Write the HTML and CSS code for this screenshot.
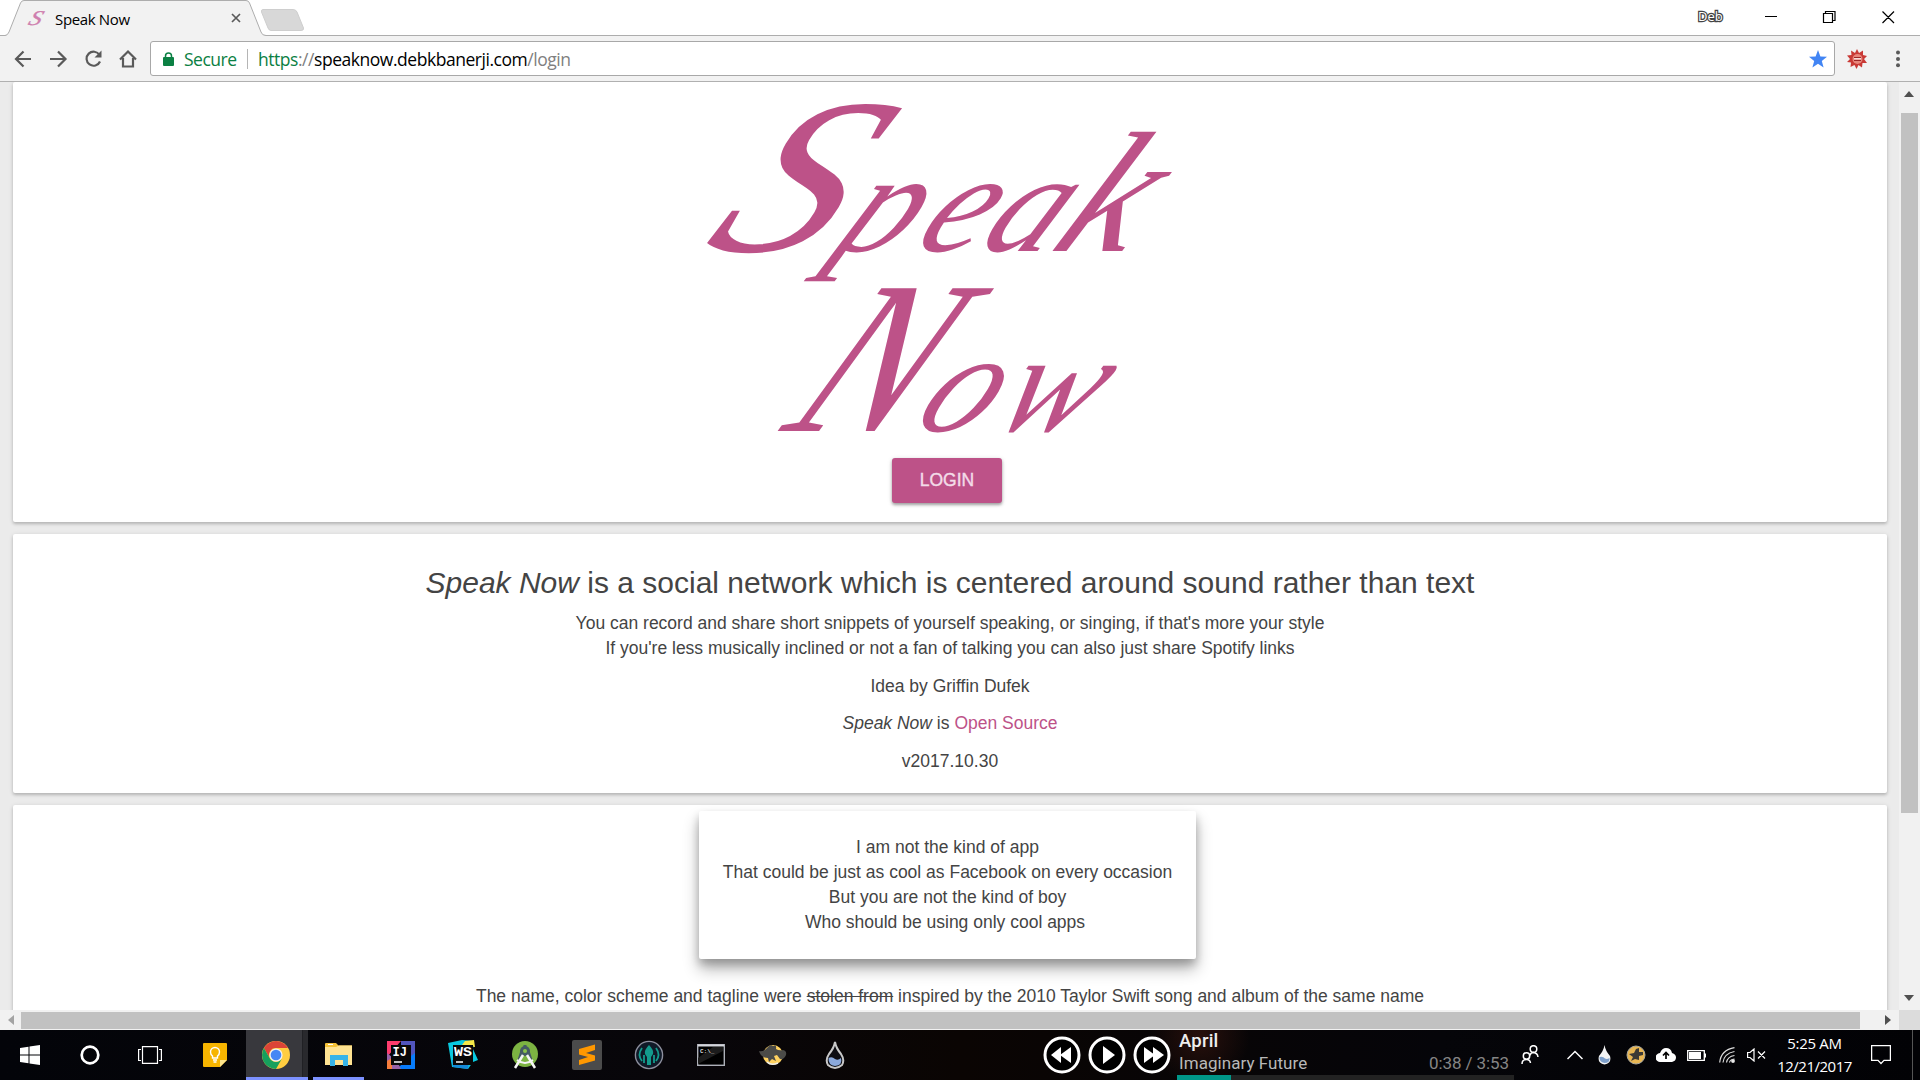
FILE: index.html
```html
<!DOCTYPE html>
<html lang="en">
<head>
<meta charset="utf-8">
<title>Speak Now</title>
<link rel="stylesheet" href="styles.css">
</head>
<body>
<div class="desktop">
  <header class="titlebar">
    <div class="tab">
      <svg class="tab-shape" width="266" height="36" viewBox="0 0 266 36"><path d="M0 36V35.5H6Q8 35 9 32L20.500 3Q21.500.5 24 .5H246Q248.500.5 249.500 3L261 32Q262 35.500 266 35.500V36Z" fill="#f2f2f2"/><path d="M0 35.500H5Q7.500 35.500 9 32L20.500 3Q21.500.5 24 .5H246Q248.500.5 249.500 3L261 32Q262 35.500 266 35.500" fill="none" stroke="#adadad"/></svg>
      <span class="favicon">S</span>
      <span class="tab-title">Speak Now</span>
      <svg class="tab-close" width="10" height="10" viewBox="0 0 10 10"><path d="M1 1L9 9M9 1L1 9" stroke="#5a5a5a" stroke-width="1.700"/></svg>
    </div>
    <svg class="new-tab" width="44" height="22" viewBox="0 0 44 22"><path d="M2 .5H32Q35 .5 36 3L42.500 19Q43 21.500 40 21.500H10Q8 21.500 7 19L.5 3Q0 .5 2 .5Z" fill="#d8d8d8" stroke="#cecece"/></svg>
    <span class="profile">Deb</span>
    <svg class="win-buttons" width="130" height="14" viewBox="0 0 130 14" fill="none" stroke="#000" stroke-width="1.200"><path d="M0 6.500H12M58.500 3.500H67.500V12.500H58.500ZM60.500 3.500V1.500H70V10.500H67.500M117.500 1.500L129 13M129 1.500L117.500 13"/></svg>
  </header>

  <nav class="toolbar">
    <svg class="nav-icons" width="124" height="22" viewBox="0 0 124 22" fill="none" stroke="#5a5a5a" stroke-width="2.200">
      <path d="M17 11H2.500M9.500 3.500L2 11L9.500 18.500M36 11H51M44 3.500L51.500 11L44 18.500"/>
      <path d="M85.500 7A7 7 0 1 0 86 13.500"/><path d="M87.500 2.500V9.500H80.500Z" fill="#5a5a5a" stroke="none"/>
      <path d="M106 11.500L114 3.500L122 11.500M109 10V18.500H119V10" stroke-linejoin="miter"/>
    </svg>
    <div class="omnibox">
      <svg class="lock" width="11" height="14" viewBox="0 0 11 14"><path d="M2.500 6V4A3 3 0 0 1 8.500 4V6" fill="none" stroke="#0b8043" stroke-width="1.500"/><rect y="5" width="11" height="9" rx="1" fill="#0b8043"/></svg>
      <span class="secure">Secure</span>
      <span class="divider"></span>
      <span class="url"><span class="scheme">https</span>://<span class="host">speaknow.debkbanerji.com</span>/login</span>
      <svg class="star" width="18" height="18" viewBox="0 0 18 18"><path d="M9 0L11.400 6.400L18 6.700L12.800 10.900L14.600 17.500L9 13.700L3.400 17.500L5.200 10.900L0 6.700L6.600 6.400Z" fill="#4285f4"/></svg>
    </div>
    <svg class="extension" width="20" height="20" viewBox="0 0 20 20"><path d="M10 0L12 4L16 1.500L16 6L20 7L17 10L20 14L15.500 14L15 18.500L11.500 16L9.500 20L7.500 16L3.500 18L4 13.500L0 13L3 10L0 6.500L4.500 6L4 1.500L8 4Z" fill="#c93a36"/><circle cx="10.500" cy="10" r="5" fill="#e8877c"/><path d="M7 8.500H14M7 11.500H14" stroke="#9d2727" stroke-width="1.200"/><path d="M7 9.800H14" stroke="#fff"/></svg>
    <svg class="menu-dots" width="6" height="18" viewBox="0 0 6 18" fill="#5a5a5a"><circle cx="3" cy="2.500" r="2"/><circle cx="3" cy="9" r="2"/><circle cx="3" cy="15.300" r="2"/></svg>
  </nav>

  <div class="viewport">
    <main class="page">
      <section class="card hero">
        <svg class="wordmark" width="500" height="354" viewBox="0 0 500 354" role="img" aria-label="Speak Now">
          <g transform="translate(0 166) skewX(-30)"><text y="-1"><tspan class="initial" x="2" textLength="124" lengthAdjust="spacingAndGlyphs">S</tspan></text><text y="-1"><tspan class="letters" x="132 213 278">pea</tspan><tspan class="tall" x="350">k</tspan></text></g>
          <g transform="translate(0 345) skewX(-30)"><text class="initial-n" x="82" textLength="124" lengthAdjust="spacingAndGlyphs">N</text><text class="letters" x="212 290">ow</text></g>
        </svg>
        <button class="login">LOGIN</button>
      </section>

      <section class="card about">
        <h1><em>Speak Now</em> is a social network which is centered around sound rather than text</h1>
        <p>You can record and share short snippets of yourself speaking, or singing, if that's more your style<br>If you're less musically inclined or not a fan of talking you can also just share Spotify links</p>
        <p>Idea by Griffin Dufek</p>
        <p><em>Speak Now</em> is <a>Open Source</a></p>
        <p>v2017.10.30</p>
      </section>

      <section class="card lyrics">
        <div class="verse">I am not the kind of app<br>That could be just as cool as Facebook on every occasion<br>But you are not the kind of boy<br><span class="last-line">Who should be using only cool apps</span></div>
        <p class="credit">The name, color scheme and tagline were <s>stolen from</s> inspired by the 2010 Taylor Swift song and album of the same name</p>
      </section>
    </main>
    <div class="vscroll">
      <svg width="10" height="6" viewBox="0 0 10 6"><path d="M5 0L10 6H0Z" fill="#505050"/></svg>
      <span class="vthumb"></span>
      <svg class="down" width="10" height="6" viewBox="0 0 10 6"><path d="M0 0H10L5 6Z" fill="#505050"/></svg>
    </div>
  </div>
  <div class="hscroll">
    <div class="htrack">
      <svg width="6" height="10" viewBox="0 0 6 10"><path d="M6 0V10L0 5Z" fill="#a3a3a3"/></svg>
      <span class="hthumb"></span>
      <svg class="right" width="6" height="10" viewBox="0 0 6 10"><path d="M0 0V10L6 5Z" fill="#505050"/></svg>
    </div>
  </div>

  <footer class="taskbar">
    <div class="system">
      <span><svg width="20" height="20" viewBox="0 0 20 20" fill="#fff"><path d="M0 3L8.500 1.800V9.500H0ZM9.500 1.600L20 0V9.500H9.500ZM0 10.500H8.500V18.200L0 17ZM9.500 10.500H20V20L9.500 18.400Z"/></svg></span>
      <span><svg width="20" height="20" viewBox="0 0 20 20"><circle cx="10" cy="10" r="8.300" fill="none" stroke="#fff" stroke-width="2.700"/></svg></span>
      <span><svg width="24" height="18" viewBox="0 0 24 18" fill="none" stroke="#fff" stroke-width="1.200"><path d="M4.500.6H19.500V17.400H4.500ZM3 3.500H.6V14.500H3M21 3.500H23.400V14.500H21"/></svg></span>
    </div>
    <div class="apps">
      <span><svg width="24" height="24" viewBox="0 0 24 24"><path d="M1 0H23Q24 0 24 1V17L17 24H1Q0 24 0 23V1Q0 0 1 0Z" fill="#f7b500"/><path d="M24 17L17 24V17Z" fill="#ffe58c"/><path d="M9.500 15V13Q7.500 11.500 7.500 9A4.500 4.500 0 0 1 16.500 9Q16.500 11.500 14.500 13V15ZM10 17H14M10.500 19H13.500" fill="none" stroke="#fff" stroke-width="1.400"/></svg></span>
      <span class="active"><svg width="28" height="28" viewBox="0 0 28 28"><circle cx="14" cy="14" r="14" fill="#ffcd40"/><path d="M1.900 7A14 14 0 0 1 26.100 7H14A7 7 0 0 0 7.900 17.500Z" fill="#db4437"/><path d="M1.900 7A14 14 0 0 0 14 28L20 17.500A7 7 0 0 1 7.900 17.500Z" fill="#16a05d"/><circle cx="14" cy="14" r="6.600" fill="#f1f1f1"/><circle cx="14" cy="14" r="5.300" fill="#4688f4"/></svg></span>
      <span class="open"><svg width="28" height="24" viewBox="0 0 28 24"><path d="M0 1Q0 0 1 0H11L13.500 2.500H27V22H0Z" fill="#f5c238"/><path d="M3 1H8V2H3Z" fill="#fff"/><path d="M0 4H11L14 2.500H27V22H0Z" fill="#ffe392"/><path d="M5 23V12H23V23H18V17H10V23Z" fill="#37b4e9"/></svg></span>
      <span><svg width="28" height="28" viewBox="0 0 28 28"><path d="M0 0H14L0 16Z" fill="#fd3c6d"/><path d="M14 0H28V20L14 14Z" fill="#5155bd"/><path d="M28 12V28H10L20 18Z" fill="#087cfa"/><path d="M0 12L10 20L14 28H0Z" fill="#9862a7"/><path d="M0 20L5 17V28H0Z" fill="#f57c3b"/><rect x="4" y="4" width="20" height="20" fill="#080808"/><text class="badge-text" x="5.500" y="15">IJ</text><path d="M7 21H15" stroke="#fff" stroke-width="1.500"/></svg></span>
      <span><svg width="30" height="30" viewBox="0 0 30 30"><path d="M0 3L14 0L26 1L25 9L30 20L25 22L20 29L4 27Z" fill="#09c9df"/><path d="M4 20H21L20 29L5 27Z" fill="#168ad8"/><path d="M17 1L26 0L27 7L14 5Z" fill="#f6e948"/><rect x="5" y="5" width="20" height="20" fill="#080808"/><text class="badge-text" x="6" y="16" textLength="18" lengthAdjust="spacingAndGlyphs">WS</text><path d="M8 22H15" stroke="#fff" stroke-width="1.500"/></svg></span>
      <span><svg width="28" height="30" viewBox="0 0 28 30"><circle cx="14" cy="14" r="13" fill="#7cb342"/><circle cx="14" cy="11" r="5" fill="#455a64"/><path d="M14 5V8M11 11L8 20M17 11L20 20" stroke="#455a64" stroke-width="3"/><circle cx="14" cy="11" r="2" fill="#8bc34a"/><path d="M12 15L4 28M16 15L24 28" stroke="#f5f5f5" stroke-width="2.500"/><path d="M6 20Q14 26 22 20" fill="none" stroke="#f5f5f5" stroke-width="2"/></svg></span>
      <span><svg width="30" height="30" viewBox="0 0 30 30"><rect width="30" height="30" rx="2" fill="#4b4b4b"/><path d="M7 9L23 4.500V10L14 13L23 15.500V20.500L7 25V20L16 17L7 14.500Z" fill="#ff9800"/></svg></span>
      <span><svg width="30" height="30" viewBox="0 0 30 30"><circle cx="15" cy="15" r="13.600" fill="#101a28" stroke="#8d8f9e" stroke-width="1.400"/><path d="M15 5Q20 10 19 14L17 17V25H13V17L11 14Q10 10 15 5Z" fill="#139b8d"/><path d="M8 8Q3 15 8 21M22 8Q27 15 22 21M10 15V23M20 15V23" fill="none" stroke="#139b8d" stroke-width="1.800"/></svg></span>
      <span><svg width="28" height="22" viewBox="0 0 28 22"><rect x=".7" y=".7" width="26.600" height="20.600" fill="#000" stroke="#adb0b8" stroke-width="1.400"/><path d="M1 1.500H27" stroke="#d5d7dc" stroke-width="2"/><path d="M16 3H26V7L1 20V14Z" fill="#1c1c1c"/><text class="prompt" x="3" y="8.500">C:\_</text></svg></span>
      <span><svg width="28" height="24" viewBox="0 0 28 24"><circle cx="14" cy="12" r="10" fill="#ffd260"/><path d="M0 8Q5 9 8 5Q11 1 14 3Q18 1 17 6Q20 8 24 7Q28 8 27 12Q25 17 21 16L18 12L15 13L17 18L13 16L10 19L9 15Q2 15 0 8Z" fill="#4b4b48"/><path d="M8 19Q12 23 19 20" fill="none" stroke="#eee" stroke-width="1.500"/></svg></span>
      <span><svg width="20" height="30" viewBox="0 0 20 30"><path d="M10 2Q11 8 16 14Q20 20 17 25Q10 31 3 25Q0 20 4 14Q9 8 10 2Z" fill="#0d0d12" stroke="#c8c8c8" stroke-width="2"/><path d="M3.500 18Q7 16 10 19Q13 21 16 18Q18 25 10 26Q3 25 3.500 18Z" fill="#8ba9dc"/></svg></span>
    </div>

    <div class="player">
      <div class="controls">
        <svg width="38" height="38" viewBox="0 0 38 38"><circle cx="19" cy="19" r="17" fill="#000" stroke="#fff" stroke-width="3"/><path d="M18 11V27L8 19ZM28 11V27L17 19Z" fill="#fff"/></svg>
        <svg width="38" height="38" viewBox="0 0 38 38"><circle cx="19" cy="19" r="17" fill="#000" stroke="#fff" stroke-width="3"/><path d="M15 10V28L27 19Z" fill="#fff"/></svg>
        <svg width="38" height="38" viewBox="0 0 38 38"><circle cx="19" cy="19" r="17" fill="#000" stroke="#fff" stroke-width="3"/><path d="M11 11V27L22 19ZM20 11V27L31 19Z" fill="#fff"/></svg>
      </div>
      <div class="now-playing">
        <div class="song">April</div>
        <div class="artist-row"><span class="artist">Imaginary Future</span><span class="elapsed">0:38 / 3:53</span></div>
        <div class="progress"><span></span></div>
      </div>
    </div>

    <div class="tray">
      <svg class="people" width="18" height="20" viewBox="0 0 18 20" fill="none" stroke="#fff" stroke-width="1.500"><circle cx="12.500" cy="4" r="3.300"/><circle cx="5.500" cy="11" r="3.200"/><path d="M1 19Q1 14.500 5.500 14.500Q9 14.500 9.500 18M9 10.500Q9.500 7.500 12.500 7.500Q16.500 8 17 12"/></svg>
      <svg class="chevron" width="16" height="10" viewBox="0 0 16 10"><path d="M.5 9L8 1.500L15.500 9" fill="none" stroke="#fff" stroke-width="1.500"/></svg>
      <svg class="drop" width="13" height="20" viewBox="0 0 13 20"><path d="M6.500 0Q7.500 6 12 11Q14 18 6.500 19.500Q-1 18 1 11Q5.500 6 6.500 0Z" fill="#f4f4f4"/><path d="M1.500 12Q5 11 7 13.500Q9 14.500 11.500 13Q12 18 6.500 18Q1 17 1.500 12Z" fill="#7e9fca"/></svg>
      <svg class="bee" width="20" height="20" viewBox="0 0 20 20"><circle cx="10" cy="10" r="9" fill="#e8b653" stroke="#a8a8a0"/><path d="M3 9L8 8L10 4L13 3L13 7L17 7L17 10L13 11L13 15L9 14L5 16L7 12Z" fill="#3c3a35"/></svg>
      <svg class="cloud" width="20" height="14" viewBox="0 0 20 14"><path d="M5 14A5 4.500 0 0 1 4 5Q6 0 10 0Q15 0 16 5Q20 6 20 9.500Q20 13 16 14Z" fill="#fff"/><path d="M10 11V5M7 7.500L10 4.500L13 7.500" fill="none" stroke="#000" stroke-width="1.700"/></svg>
      <svg class="battery" width="19" height="11" viewBox="0 0 19 11"><path d="M.7.700H17.300V10.300H.7Z" fill="none" stroke="#fff" stroke-width="1.300"/><path d="M2 2H14V9H2ZM17 3.500H19V7.500H17Z" fill="#fff"/></svg>
      <svg class="wifi" width="16" height="16" viewBox="0 0 16 16" fill="none" stroke="#ddd" stroke-width="1.200"><path d="M.7 15.500Q2 3 15.500.7M4 15.500Q5 6.500 15.500 4.500M7.500 15.500Q8.500 9.500 15.500 8.500M10.500 15.500Q11 12.500 15.500 12"/><circle cx="14" cy="14" r="1.300" fill="#fff"/></svg>
      <svg class="volume" width="19" height="14" viewBox="0 0 19 14" fill="none" stroke="#fff" stroke-width="1.200"><path d="M.6 4.500H3L7 1V13L3 9.500H.6ZM11 3.500L18 10.500M18 3.500L11 10.500"/></svg>
      <div class="clock"><span class="time">5:25 AM</span><span class="date">12/21/2017</span></div>
      <svg class="action" width="20" height="20" viewBox="0 0 20 20"><path d="M.6.600H19.400V15.400H13L10 18.500L7 15.400H.6Z" fill="none" stroke="#fff" stroke-width="1.300"/></svg>
      <span class="show-desktop"></span>
    </div>
  </footer>
</div>
</body>
</html>
```
FILE: styles.css
```css
* { box-sizing: border-box; }
body { margin: 0; overflow: hidden; font-family: "Liberation Sans", Arial, sans-serif; }
svg { display: block; flex: none; }
.desktop { width: 1920px; height: 1080px; display: flex; flex-direction: column; background: #fff; overflow: hidden; }

.titlebar { height: 36px; flex: none; display: flex; align-items: flex-start; background: linear-gradient(#adadad, #adadad) bottom / 100% 1px no-repeat #fff; font-family: "Open Sans", "Noto Sans", sans-serif; }
.tab { position: relative; width: 266px; height: 36px; flex: none; display: flex; align-items: center; padding-left: 28px; }
.tab-shape { position: absolute; left: 0; top: 0; }
.favicon { position: relative; width: 27px; font: italic 21px/36px "Liberation Serif", serif; color: #cf7fae; transform: skewX(-22deg) scaleX(1.2); -webkit-text-stroke: .3px #cf7fae; padding-left: 4px; }
.tab-title { position: relative; width: 176px; font-size: 15px; letter-spacing: -.35px; color: #000; padding-top: 1px; }
.tab-close { position: relative; }
.new-tab { margin: 9px 0 0 -5px; }
.profile { margin: 8px 0 0 1393px; width: 67px; font-size: 13px; line-height: 16px; color: #fff; -webkit-text-stroke: 2.500px #444; paint-order: stroke fill; }
.win-buttons { margin-top: 10px; }

.toolbar { height: 46px; flex: none; display: flex; align-items: center; background: #f2f2f2; border-bottom: 1px solid #b0b0b0; padding: 0 0 0 14px; font-family: "Open Sans", "Noto Sans", sans-serif; }
.nav-icons { margin-right: 12px; }
.omnibox { width: 1685px; height: 35px; display: flex; align-items: center; background: #fff; border: 1px solid #a8a8a8; border-radius: 3px; padding: 0 7px 0 12px; font-size: 17.500px; white-space: nowrap; }
.secure { width: 63px; margin-left: 10px; color: #0b8043; letter-spacing: -.5px; }
.divider { width: 1px; height: 20px; background: #b5b5b5; margin-right: 10px; }
.url { color: #808080; letter-spacing: -.46px; }
.scheme { color: #0b8043; }
.host { color: #000; }
.star { margin-left: auto; }
.extension { margin-left: 12px; }
.menu-dots { margin-left: 28px; }

.viewport { height: 928px; flex: none; display: flex; overflow: hidden; background: #ebebeb; }
.page { width: 1899px; height: 928px; overflow: hidden; display: flex; flex-direction: column; gap: 12px; padding: 0 12px 0 13px; color: #444; font-size: 17.500px; line-height: 25px; text-align: center; }
.card { flex: none; background: #fff; box-shadow: 0 2px 3px rgba(0,0,0,.16), 0 1px 5px rgba(0,0,0,.12); border-radius: 2px; }
.hero { height: 440px; display: flex; flex-direction: column; align-items: center; padding: 4px 6px 0 0; }
.wordmark { overflow: visible; fill: #bd5288; font-family: "Liberation Serif", serif; font-style: italic; margin-bottom: 18px; }
.initial { font-size: 222px; }
.initial-n { font-size: 218px; }
.letters { font-size: 142px; }
.tall { font-size: 172px; }
.login { width: 110px; height: 45px; border: 0; border-radius: 3px; background: #bd5288; color: #f3dce8; font: 17.500px "Liberation Sans", Arial, sans-serif; -webkit-text-stroke: .4px #f3dce8; box-shadow: 0 2px 3px rgba(0,0,0,.3), 0 1px 5px rgba(0,0,0,.15); }
.about { height: 259px; padding-top: 30px; }
.about h1 { margin: 0 0 10px; font-size: 30px; line-height: 37px; font-weight: 400; }
.about p { margin: 0 0 12.500px; }
.about a { color: #bd5288; }
.lyrics { height: 260px; padding-top: 6px; }
.verse { width: 497px; height: 148px; margin: 0 auto; position: relative; left: -2.500px; padding-top: 24px; border-radius: 2px; background: #fff; box-shadow: 0 10px 16px rgba(0,0,0,.3), 0 5px 8px rgba(0,0,0,.2); white-space: nowrap; }
.last-line { margin-right: 5px; }
.credit { margin: 25px 0 0; }

.vscroll { width: 21px; flex: none; background: #f1f1f1; display: flex; flex-direction: column; align-items: center; padding: 9px 1px 9px 0; }
.vthumb { width: 17px; height: 700px; margin-top: 16px; background: #c1c1c1; }
.down { margin-top: auto; }
.hscroll { height: 20px; flex: none; background: #dcdcdc; }
.htrack { width: 1899px; height: 20px; display: flex; align-items: center; background: #f1f1f1; padding: 0 8px; }
.hthumb { width: 1839px; height: 17px; margin-left: 7px; background: #c1c1c1; }
.right { margin-left: auto; }

.taskbar { height: 50px; flex: none; display: flex; background: radial-gradient(circle at 1200px 6px, #28100c, transparent 50px), linear-gradient(90deg, #030409, #08060a 35%, #0a0503 50%, #050509 75%, #020205); color: #fff; }
.system, .apps { display: flex; flex: none; }
.system span, .apps span { height: 50px; display: flex; align-items: center; justify-content: center; }
.system span { width: 60px; }
.apps { padding-left: 4px; }
.apps span { width: 62px; }
.apps .active { background: linear-gradient(#7c91ff, #7c91ff) bottom / 100% 3px no-repeat, linear-gradient(90deg, #38383d 56px, #17171b 56px, #29292d 57px); padding-right: 2px; }
.apps .open { background: linear-gradient(#7c91ff, #7c91ff) 5px bottom / 51px 3px no-repeat; }
.badge-text { font: bold 12px "Liberation Mono", monospace; fill: #fff; }
.prompt { font: bold 6px "Liberation Mono", monospace; fill: #ddd; }
.player { display: flex; margin-left: 177px; width: 478px; flex: none; font-family: Roboto, sans-serif; }
.controls { display: flex; gap: 7px; padding-top: 6px; }
.now-playing { width: 337px; margin-left: 6px; display: flex; flex-direction: column; }
.song { height: 25px; padding: 0 2px; font-size: 18.500px; line-height: 22px; color: #eee; letter-spacing: .2px; font-weight: 500; }
.artist-row { height: 20px; display: flex; justify-content: space-between; padding: 0 5px 0 2px; font-size: 17px; line-height: 16px; color: #b8b8b8; white-space: nowrap; }
.artist { letter-spacing: .05px; }
.elapsed { color: #858585; letter-spacing: -.1px; }
.progress { height: 5px; background: #222; }
.progress span { display: block; width: 54px; height: 5px; background: #009688; }
.tray { display: flex; align-items: center; width: 397px; flex: none; font-family: "Open Sans", "Noto Sans", sans-serif; }
.chevron { margin-left: 28px; }
.drop { margin-left: 15px; }
.bee { margin-left: 15px; }
.cloud { margin-left: 10px; }
.battery { margin-left: 11px; }
.wifi { margin-left: 13px; }
.volume { margin-left: 12px; }
.clock { width: 75px; margin-left: 11px; display: flex; flex-direction: column; align-items: center; font-size: 15px; line-height: 23px; white-space: nowrap; letter-spacing: -.5px; }
.time { letter-spacing: -.3px; }
.action { margin-left: 19px; }
.show-desktop { width: 1px; height: 50px; margin-left: auto; margin-right: 5px; background: #555; }
```
